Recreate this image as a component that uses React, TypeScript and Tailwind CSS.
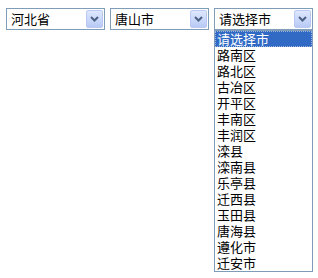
import React from "react";

const Arrow = () => (
  <div className="absolute right-[1px] top-[1px] bottom-[1px] w-[17px] rounded-[2px] border border-[#b9c9f2] bg-gradient-to-b from-[#dfe7fd] to-[#b7caf6] flex items-center justify-center">
    <svg width="9" height="6" viewBox="0 0 9 6">
      <path d="M1 1 L4.5 4.5 L8 1" stroke="#4d6185" strokeWidth="2" fill="none" />
    </svg>
  </div>
);

const Select = ({ label }: { label: string }) => (
  <div className="relative w-[99px] h-[22px] border border-[#7f9db9] bg-white">
    <div className="pl-[4px] h-[20px] leading-[20px] text-[13px] text-black overflow-hidden">{label}</div>
    <Arrow />
  </div>
);

const items = [
  "请选择市",
  "路南区",
  "路北区",
  "古冶区",
  "开平区",
  "丰南区",
  "丰润区",
  "滦县",
  "滦南县",
  "乐亭县",
  "迁西县",
  "玉田县",
  "唐海县",
  "遵化市",
  "迁安市",
];

export default function App() {
  return (
    <div
      className="w-[318px] h-[278px] bg-white pl-[6px] pt-[8px]"
      style={{ fontFamily: '"Noto Sans CJK SC", "Liberation Sans", sans-serif' }}
    >
      <div className="flex gap-[5px] items-start">
        <Select label="河北省" />
        <Select label="唐山市" />
        <div className="flex flex-col">
          <Select label="请选择市" />
          <div className="w-[99px] border border-[#7f9db9] bg-white mt-[0px]">
            {items.map((it, i) => (
              <div
                key={i}
                className={
                  i === 0
                    ? "h-[16px] leading-[16px] text-[13px] pl-[2px] bg-[#316ac5] text-white outline-1 outline-dotted outline-[#a0b4dc] -outline-offset-1 overflow-hidden"
                    : "h-[16px] leading-[16px] text-[13px] pl-[2px] text-black overflow-hidden"
                }
              >
                {it}
              </div>
            ))}
          </div>
        </div>
      </div>
    </div>
  );
}
